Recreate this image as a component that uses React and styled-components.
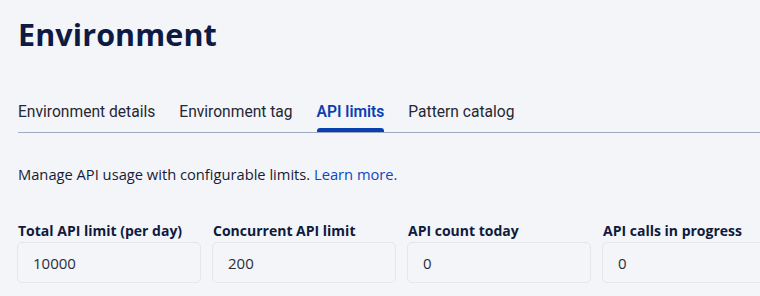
import React from "react";
import styled, { createGlobalStyle } from "styled-components";

const Global = createGlobalStyle`
  html, body { margin: 0; padding: 0; background: #f4f5f8; }
  body { font-family: "Open Sans", "Liberation Sans", sans-serif; color: #0f1a3d; }
`;

const Page = styled.div`
  padding: 12px 0 0 18px;
  overflow: hidden;
  width: 742px;
`;

const Title = styled.h1`
  margin: 0;
  font-size: 30.5px;
  line-height: 44px;
  font-weight: 700;
  color: #0c1a44;
  letter-spacing: 0.1px;
`;

const Tabs = styled.nav`
  display: flex;
  gap: 24px;
  margin-top: 47px;
  border-bottom: 1px solid #9fa9c0;
`;

const Tab = styled.div`
  font-family: Roboto, "Liberation Sans", sans-serif;
  font-size: 15.6px;
  line-height: 18px;
  padding-bottom: 11px;
  color: ${p => (p.$active ? "#0a3fb0" : "#242735")};
  font-weight: ${p => (p.$active ? 600 : 400)};
  position: relative;
  &::after {
    content: "";
    display: ${p => (p.$active ? "block" : "none")};
    position: absolute;
    left: 0;
    right: 0;
    bottom: 0;
    height: 4px;
    background: #0a3fb0;
    border-radius: 3px 3px 0 0;
  }
`;

const Description = styled.p`
  margin: 31px 0 0;
  font-size: 14.7px;
  line-height: 20px;
  color: #161c36;
`;

const Link = styled.a`
  color: #0b48c2;
  text-decoration: none;
`;

const Fields = styled.div`
  display: grid;
  grid-template-columns: repeat(4, 184px);
  column-gap: 11px;
  margin-top: 37px;
  margin-left: -1px;
`;

const Field = styled.div`
  display: flex;
  flex-direction: column;
  gap: 1px;
`;

const Label = styled.label`
  font-size: 14px;
  font-weight: 700;
  line-height: 20px;
  color: #0f1a3d;
  white-space: nowrap;
  padding-left: 1px;
`;

const Value = styled.div`
  height: 41px;
  box-sizing: border-box;
  border: 1px solid #e4e6ea;
  border-radius: 5px;
  padding: 0 15px;
  display: flex;
  align-items: center;
  font-size: 15px;
  color: #2a2d3a;
`;

const fields = [
  ["Total API limit (per day)", "10000"],
  ["Concurrent API limit", "200"],
  ["API count today", "0"],
  ["API calls in progress", "0"],
];

export default function App() {
  return (
    <Page>
      <Global />
      <Title>Environment</Title>
      <Tabs>
        <Tab>Environment details</Tab>
        <Tab>Environment tag</Tab>
        <Tab $active>API limits</Tab>
        <Tab>Pattern catalog</Tab>
      </Tabs>
      <Description>
        Manage API usage with configurable limits. <Link href="#">Learn more.</Link>
      </Description>
      <Fields>
        {fields.map(([l, v]) => (
          <Field key={l}>
            <Label>{l}</Label>
            <Value>{v}</Value>
          </Field>
        ))}
      </Fields>
    </Page>
  );
}
